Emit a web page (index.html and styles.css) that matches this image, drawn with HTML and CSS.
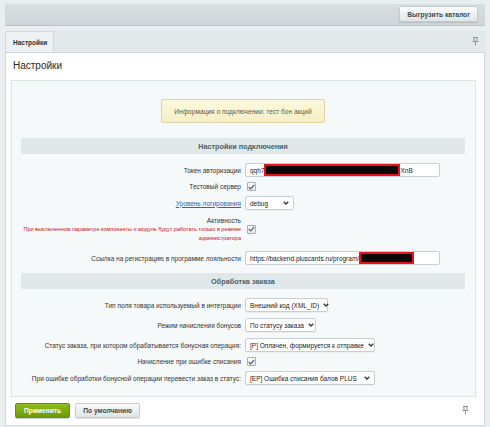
FILE: index.html
```html
<!DOCTYPE html>
<html lang="ru">
<head>
<meta charset="utf-8">
<title>Настройки</title>
<link rel="stylesheet" href="styles.css">
</head>
<body>
<div class="toolbar">
  <button class="btn btn-gray" type="button">Выгрузить каталог</button>
</div>

<div class="tabs">
  <div class="tab">Настройки</div>
  <span class="pin" title="Закрепить">
    <svg width="7" height="9" viewBox="0 0 7 9"><path d="M1 0.5h5M2 0.5v4M5 0.5v4M0.5 4.5h6M3.5 4.5v4" stroke="#8a959a" stroke-width="1" fill="none"/></svg>
  </span>
</div>

<div class="panel">
  <h1 class="title">Настройки</h1>

  <div class="content">
    <div class="notice">Информация о подключении: тест бон акций</div>

    <div class="heading">Настройки подключения</div>

    <div class="row">
      <label class="label">Токен авторизации</label>
      <div class="field">
        <div class="text-field wide"><span>qqh7</span><span class="mask"></span><span>XnB</span></div>
      </div>
    </div>

    <div class="row row-check">
      <label class="label">Тестовый сервер</label>
      <div class="field"><span class="check"><svg width="7" height="6" viewBox="0 0 7 6"><path d="M0.8 3l1.8 1.8L6.2 1" stroke="#59666c" stroke-width="1.2" fill="none"/></svg></span></div>
    </div>

    <div class="row">
      <label class="label"><a class="link" href="#">Уровень логирования</a></label>
      <div class="field">
        <span class="select w-debug"><span class="select-text">debug</span><svg class="chev" width="6" height="4" viewBox="0 0 6 4"><path d="M0.7 0.7l2.3 2.3 2.3-2.3" stroke="#333" stroke-width="1.3" fill="none"/></svg></span>
      </div>
    </div>

    <div class="row row-active">
      <div class="label">
        <div>Активность</div>
        <div class="warn">При выключенном параметре компоненты и модуль будут работать только в режиме администратора</div>
      </div>
      <div class="field"><span class="check"><svg width="7" height="6" viewBox="0 0 7 6"><path d="M0.8 3l1.8 1.8L6.2 1" stroke="#59666c" stroke-width="1.2" fill="none"/></svg></span></div>
    </div>

    <div class="row">
      <label class="label">Ссылка на регистрацию в программе лояльности</label>
      <div class="field">
        <div class="text-field wide"><span>https://backend.pluscards.ru/program/</span><span class="mask mask-short"></span></div>
      </div>
    </div>

    <div class="heading heading-next">Обработка заказа</div>

    <div class="row">
      <label class="label">Тип поля товара используемый в интеграции</label>
      <div class="field">
        <span class="select w-xml"><span class="select-text">Внешний код (XML_ID)</span><svg class="chev" width="6" height="4" viewBox="0 0 6 4"><path d="M0.7 0.7l2.3 2.3 2.3-2.3" stroke="#333" stroke-width="1.3" fill="none"/></svg></span>
      </div>
    </div>

    <div class="row">
      <label class="label">Режим начисления бонусов</label>
      <div class="field">
        <span class="select w-mode"><span class="select-text">По статусу заказа</span><svg class="chev" width="6" height="4" viewBox="0 0 6 4"><path d="M0.7 0.7l2.3 2.3 2.3-2.3" stroke="#333" stroke-width="1.3" fill="none"/></svg></span>
      </div>
    </div>

    <div class="row">
      <label class="label">Статус заказа, при котором обрабатывается бонусная операция:</label>
      <div class="field">
        <span class="select w-status"><span class="select-text">[P] Оплачен, формируется к отправке</span><svg class="chev" width="6" height="4" viewBox="0 0 6 4"><path d="M0.7 0.7l2.3 2.3 2.3-2.3" stroke="#333" stroke-width="1.3" fill="none"/></svg></span>
      </div>
    </div>

    <div class="row row-check">
      <label class="label">Начисление при ошибке списания</label>
      <div class="field"><span class="check"><svg width="7" height="6" viewBox="0 0 7 6"><path d="M0.8 3l1.8 1.8L6.2 1" stroke="#59666c" stroke-width="1.2" fill="none"/></svg></span></div>
    </div>

    <div class="row">
      <label class="label">При ошибке обработки бонусной операции перевести заказ в статус:</label>
      <div class="field">
        <span class="select w-status"><span class="select-text">[EP] Ошибка списания балов PLUS</span><svg class="chev" width="6" height="4" viewBox="0 0 6 4"><path d="M0.7 0.7l2.3 2.3 2.3-2.3" stroke="#333" stroke-width="1.3" fill="none"/></svg></span>
      </div>
    </div>
  </div>

  <div class="footer">
    <button class="btn btn-green" type="button">Применить</button>
    <button class="btn btn-gray" type="button">По умолчанию</button>
    <span class="pin pin-footer">
      <svg width="7" height="9" viewBox="0 0 7 9"><path d="M1 0.5h5M2 0.5v4M5 0.5v4M0.5 4.5h6M3.5 4.5v4" stroke="#8a959a" stroke-width="1" fill="none"/></svg>
    </span>
  </div>
</div>
</body>
</html>
```

FILE: styles.css
```css
* {
  box-sizing: border-box;
}

body {
  margin: 0;
  background: #e9eef0;
  font-family: "Liberation Sans", Arial, sans-serif;
  font-size: 6.5px;
  color: #000;
}

/* top toolbar */
.toolbar {
  margin: 4px 5px 0;
  height: 22px;
  background: linear-gradient(#d9dee0, #cfd5d8);
  border-bottom: 1px solid #bcc4c7;
  display: flex;
  align-items: center;
  justify-content: flex-end;
  padding: 0 7px 1px;
}

/* buttons */
.btn {
  font-family: "Liberation Sans", Arial, sans-serif;
  font-weight: bold;
  font-size: 6.7px;
  height: 16px;
  padding: 0 7px;
  border-radius: 2px;
  cursor: pointer;
}

.btn-gray {
  color: #3f4b50;
  background: linear-gradient(#fbfcfc, #dfe5e7);
  border: 1px solid #c3ccd0;
  box-shadow: 0 1px 1px rgba(0, 0, 0, 0.12);
}

.btn-green {
  color: #fff;
  background: linear-gradient(#8fbd1a, #6c9a0c);
  border: 1px solid #648f0b;
  box-shadow: 0 1px 1px rgba(0, 0, 0, 0.18);
  padding: 0 8px;
}

/* tab strip */
.tabs {
  margin: 5px 5px 0;
  height: 22px;
  background: #e3e9eb;
  border-bottom: 1px solid #cdd5d8;
  display: flex;
  align-items: stretch;
  justify-content: space-between;
}

.tab {
  width: 49px;
  background: #eef2f3;
  border: 1px solid #d3dadd;
  border-bottom: none;
  font-weight: bold;
  font-size: 6.5px;
  color: #2c3437;
  display: flex;
  align-items: center;
  padding-left: 7px;
  padding-top: 1px;
}

.pin {
  display: flex;
  align-items: center;
  padding-right: 6px;
}

/* main panel */
.panel {
  margin: 0 5px;
  background: #fff;
  border: 1px solid #d3dadd;
  border-top: none;
  box-shadow: 0 1px 1px rgba(0, 0, 0, 0.06);
}

.title {
  margin: 0;
  font-weight: normal;
  font-size: 10px;
  line-height: 12px;
  color: #1f2628;
  padding: 7px 7px 0;
}

.content {
  margin: 8px 8px 0 5px;
  background: #f5f9f9;
  border: 1px solid #dbe4e7;
  padding: 18px 10px 8px 9px;
}

.notice {
  width: 164px;
  height: 24px;
  margin: 0 auto 15px;
  background: linear-gradient(#fcf9de, #f5efc6);
  border: 1px solid #ddd3a3;
  border-radius: 2px;
  color: #5e5c4c;
  display: flex;
  align-items: center;
  justify-content: center;
  font-size: 6.6px;
}

.heading {
  height: 16px;
  background: #e0e8ea;
  color: #4b6267;
  font-weight: bold;
  font-size: 7.3px;
  display: flex;
  align-items: center;
  justify-content: center;
  margin-bottom: 6px;
}

.heading-next {
  margin-top: 5px;
}

/* form rows */
.row {
  display: grid;
  grid-template-columns: 1fr 1fr;
  column-gap: 4px;
  align-items: center;
  padding: 3px 0;
}

.row-check {
  padding: 2px 0;
}

.row-active {
  padding: 3px 0 6px;
}

.label {
  text-align: right;
  line-height: 9px;
  color: #333;
  white-space: nowrap;
}

.link {
  color: #2a68b1;
  text-decoration: underline;
}

.warn {
  color: #c9102c;
  font-size: 5.5px;
  line-height: 8.5px;
  white-space: normal;
}

.field {
  display: flex;
  align-items: center;
}

.text-field {
  height: 14px;
  background: #fff;
  border: 1px solid #c6d0d4;
  border-radius: 2px;
  display: flex;
  align-items: center;
  padding: 0 4px;
  color: #222;
  white-space: nowrap;
  overflow: hidden;
}

.wide {
  width: 195px;
}

.mask {
  width: 136px;
  height: 12px;
  background: #0c0606;
  border: 2px solid #e3141b;
  flex: none;
}

.mask-short {
  width: 55px;
}

.select {
  position: relative;
  height: 14px;
  background: #fff;
  border: 1px solid #c6d0d4;
  border-radius: 2px;
  display: flex;
  align-items: center;
  padding: 0 4px;
  color: #222;
  white-space: nowrap;
  box-shadow: 0 1px 0 rgba(0, 0, 0, 0.04);
}

.select-text {
  flex: 1;
}

.chev {
  flex: none;
  margin-left: 4px;
}

.w-debug {
  width: 49px;
}

.w-xml {
  width: 83px;
}

.w-mode {
  width: 71px;
}

.w-status {
  width: 130px;
}

.check {
  width: 9px;
  height: 9px;
  border: 1px solid #a6b0b5;
  border-radius: 1px;
  background: linear-gradient(#ffffff, #e4e9eb);
  display: flex;
  align-items: center;
  justify-content: center;
  margin-left: 2px;
}

/* footer */
.footer {
  display: flex;
  align-items: center;
  gap: 5px;
  padding: 6px 9px 7px;
}

.footer .btn {
  height: 15px;
}

.pin-footer {
  margin-left: auto;
  padding-right: 6px;
}
```
